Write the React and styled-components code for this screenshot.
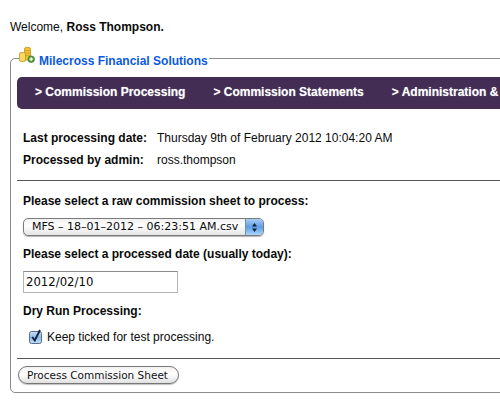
import React from "react";
import styled, { createGlobalStyle } from "styled-components";

const Global = createGlobalStyle`
  html, body { margin: 0; padding: 0; background: #fff; overflow: hidden; }
  body { width: 500px; height: 414px; font-family: "Liberation Sans", Arial, sans-serif; font-size: 12px; color: #0a0a0a; }
`;
const Page = styled.div`
  width: 620px;
  padding: 20px 0 0 10px;
  box-sizing: border-box;
`;
const Welcome = styled.p`
  margin: 0 0 11px;
  line-height: 14px;
`;
const Panel = styled.fieldset`
  margin: 0;
  padding: 0 6px 8px 6px;
  border: 1px solid #8c8c8c;
  border-radius: 5px;
  min-width: 0;
  height: 348px;
  box-sizing: border-box;
`;
const Legend = styled.legend`
  display: flex;
  align-items: flex-end;
  gap: 4px;
  margin-left: 2px;
  padding: 0 1px 1px 0;
  height: 26px;
  box-sizing: border-box;
  color: #0a5ae0;
  font-weight: bold;
  line-height: 18px;
`;
const LegendIcon = styled.svg`
  width: 16px;
  height: 16px;
  margin-bottom: 7px;
  flex: none;
`;
const Nav = styled.nav`
  display: flex;
  gap: 28px;
  margin-top: 6px;
  height: 32px;
  box-sizing: border-box;
  padding: 0 0 3px 18px;
  align-items: center;
  background: #432d54;
  border-radius: 5px;
  white-space: nowrap;
`;
const NavLink = styled.a`
  color: #fff;
  font-weight: bold;
  text-shadow: 0 0 1px rgba(255,255,255,.5);
`;
const Info = styled.dl`
  display: grid;
  grid-template-columns: 134px 1fr;
  row-gap: 8px;
  margin: 22px 0 13px 6px;
  line-height: 14px;
`;
const Term = styled.dt`
  font-weight: bold;
`;
const Detail = styled.dd`
  margin: 0;
`;
const Rule = styled.hr`
  margin: 0;
  border: 0;
  border-top: 1px solid #555;
`;
const Heading = styled.h4`
  margin: ${p => p.$top}px 0 0 6px;
  font-size: 12px;
  line-height: 14px;
  font-weight: bold;
`;
const Select = styled.div`
  display: flex;
  align-items: stretch;
  width: 241px;
  height: 18px;
  margin: 10px 0 0 6px;
  box-sizing: border-box;
  border: 1px solid #7b7b7b;
  border-radius: 5px;
  overflow: hidden;
  background: linear-gradient(#f0f0f0, #fff 40%, #e4e4e4);
  box-shadow: 0 1px 1px rgba(0,0,0,.3);
  font-family: "DejaVu Sans", sans-serif;
  font-size: 11px;
`;
const SelectText = styled.span`
  flex: 1;
  padding-left: 8px;
  line-height: 16px;
  white-space: nowrap;
`;
const Stepper = styled.span`
  width: 17px;
  flex: none;
  display: flex;
  align-items: center;
  justify-content: center;
  background: linear-gradient(#a9cdf5, #5f9de6 50%, #a8d4fa);
  border-left: 1px solid #6d8fc0;
`;
const DateInput = styled.div`
  width: 155px;
  height: 22px;
  margin: 10px 0 0 6px;
  box-sizing: border-box;
  border: 1px solid #b4b4b4;
  border-top-color: #8c8c8c;
  padding-left: 2px;
  font-family: "DejaVu Sans", sans-serif;
  font-size: 11.7px;
  line-height: 20px;
`;
const CheckRow = styled.div`
  display: flex;
  align-items: flex-end;
  gap: 5px;
  margin: 11px 0 14px 12px;
  line-height: 14px;
`;
const Check = styled.svg`
  width: 13px;
  height: 15px;
  display: block;
`;
const Button = styled.button`
  display: block;
  margin: 7px 0 0 1px;
  width: 161px;
  height: 18px;
  padding: 0 2px 0 0;
  border: 1px solid #777;
  border-radius: 9px;
  background: linear-gradient(#f2f2f2, #fff 45%, #e0e0e0);
  box-shadow: 0 1px 1px rgba(0,0,0,.25);
  font: 10.5px "DejaVu Sans", sans-serif;
  color: #111;
`;

export default function App() {
  return (
    <Page>
      <Global />
      <Welcome>Welcome, <b>Ross Thompson.</b></Welcome>
      <Panel>
        <Legend>
          <LegendIcon viewBox="0 0 16 16">
            <rect x="5.5" y=".5" width="6" height="12.5" rx="1.5" fill="#f2c230" stroke="#c08a18" strokeWidth=".7" />
            <path d="M5.5 3.5h6M5.5 6h6M5.5 8.5h6" stroke="#c9961f" strokeWidth=".6" />
            <rect x=".5" y="5.5" width="6" height="9" rx="1.5" fill="#f7d860" stroke="#c08a18" strokeWidth=".7" />
            <circle cx="12.2" cy="12.2" r="3.3" fill="#4f9a3a" stroke="#2f6b25" strokeWidth=".6" />
            <path d="M12.2 10.3v3.8M10.3 12.2h3.8" stroke="#fff" strokeWidth="1.2" />
          </LegendIcon>
          Milecross Financial Solutions
        </Legend>
        <Nav>
          <NavLink>&gt; Commission Processing</NavLink>
          <NavLink>&gt; Commission Statements</NavLink>
          <NavLink>&gt; Administration &amp;</NavLink>
        </Nav>
        <Info>
          <Term>Last processing date:</Term>
          <Detail>Thursday 9th of February 2012 10:04:20 AM</Detail>
          <Term>Processed by admin:</Term>
          <Detail>ross.thompson</Detail>
        </Info>
        <Rule />
        <Heading $top={13}>Please select a raw commission sheet to process:</Heading>
        <Select>
          <SelectText>MFS – 18–01–2012 – 06:23:51 AM.csv</SelectText>
          <Stepper>
            <svg width="7" height="11" viewBox="0 0 7 11"><path d="M3.5 1 6 4.5H1zM3.5 10 1 6.5h5z" fill="#123" /></svg>
          </Stepper>
        </Select>
        <Heading $top={11}>Please select a processed date (usually today):</Heading>
        <DateInput>2012/02/10</DateInput>
        <Heading $top={11}>Dry Run Processing:</Heading>
        <CheckRow>
          <Check viewBox="0 0 13 15">
            <defs>
              <linearGradient id="chk" x1="0" y1="0" x2="0" y2="1">
                <stop offset="0" stopColor="#c8def7" /><stop offset=".5" stopColor="#8dbbef" /><stop offset="1" stopColor="#bfe0fa" />
              </linearGradient>
            </defs>
            <rect x=".5" y="2.5" width="12" height="12" rx="2" fill="url(#chk)" stroke="#5a6f8e" />
            <path d="M3.2 8 5.8 11.5 11 1" fill="none" stroke="#15233a" strokeWidth="1.9" />
          </Check>
          Keep ticked for test processing.
        </CheckRow>
        <Rule />
        <Button>Process Commission Sheet</Button>
      </Panel>
    </Page>
  );
}
